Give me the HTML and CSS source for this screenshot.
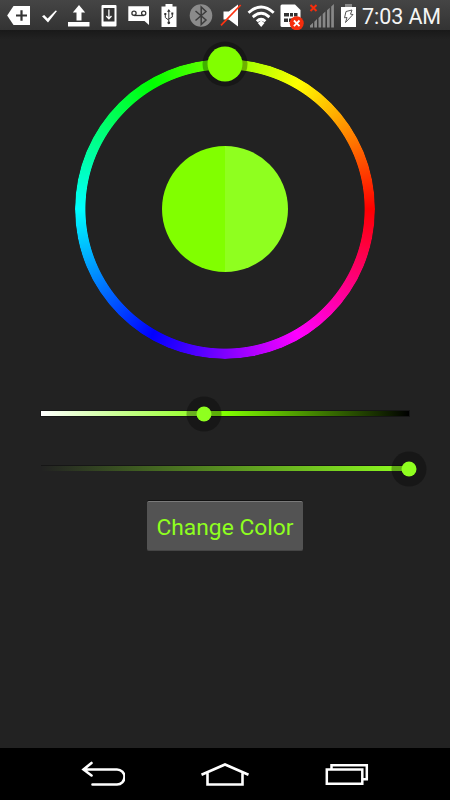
FILE: index.html
```html
<!DOCTYPE html>
<html lang="en">
<head>
  <meta charset="UTF-8" />
  <meta name="viewport" content="width=device-width, initial-scale=1.0"/>
  <title>Color Picker</title>
  <link rel="stylesheet" href="styles.css">
</head>
<body>

  <header class="status-bar">
    <!-- keyboard -->
    <svg width="36" height="30" viewBox="0 0 36 30"><path d="M7.2 15.5 13.5 6H30v19H13.500z" fill="#fff"/><path d="M21.500 10.200v10.600M16 15.500h11" stroke="#333" stroke-width="2.200"/></svg>
    <!-- check -->
    <svg width="26" height="30" viewBox="36 0 26 30"><path d="M42 16.200l2.200-1.300 3.400 3.600 8-8 1.400.5L48 22.600z" fill="#fff"/></svg>
    <!-- upload -->
    <svg width="34" height="30" viewBox="62 0 34 30"><path d="M79 5l6.200 7.500h-3.700v8h-5v-8h-3.700zM68 22h21.500v4.500H68z" fill="#fff"/></svg>
    <!-- download to phone -->
    <svg width="27" height="30" viewBox="96 0 27 30"><rect x="101.500" y="5" width="15" height="21.500" rx="1" fill="#fff"/><path d="M103.500 8h11v13.500h-11z" fill="#333"/><path d="M108.900 9.500v9M106.300 16l2.600 2.800 2.600-2.800" fill="none" stroke="#fff" stroke-width="1.300"/></svg>
    <!-- voicemail -->
    <svg width="31" height="30" viewBox="123 0 31 30"><path d="M128.300 6.200H149V25l-4.500-4h-16.200z" fill="#fff"/><path d="M134 15.500h10" stroke="#333" stroke-width="1.300"/><circle cx="134" cy="13.300" r="2.100" fill="none" stroke="#333" stroke-width="1.300"/><circle cx="143.700" cy="13.300" r="2.100" fill="none" stroke="#333" stroke-width="1.300"/></svg>
    <!-- usb -->
    <svg width="29" height="30" viewBox="154 0 29 30"><path d="M161.500 6.500h4V4h7v2.500h4V27h-15z" fill="#fff"/><path d="M168.800 10.500v13M165.300 14v3.500l3.500 2.700M172.300 13.500v3.500l-3.500 2" fill="none" stroke="#333"/><path d="M168.800 9l1.800 2.700H167zM164.300 13h2v2h-2zM171.300 12.500h2v2h-2z" fill="#333"/><circle cx="168.800" cy="22.800" r="1.400" fill="#333"/></svg>
    <!-- bluetooth -->
    <svg width="33" height="30" viewBox="183 0 33 30"><circle cx="201" cy="15.500" r="11.300" fill="#8b8b8b"/><path d="M195.500 11l10.500 9-4.800 4.500V7L206 11.500 195.500 20.500" fill="none" stroke="#3c3c3c" stroke-width="1.500"/></svg>
    <!-- muted speaker -->
    <svg width="29" height="30" viewBox="216 0 29 30"><path d="M223.500 11.500h5.300l9.200-7v22l-9.200-7h-5.300z" fill="#fff"/><path d="M221 25.300L240.700 5" stroke="#f31" stroke-width="1.700"/></svg>
    <!-- wifi -->
    <svg width="33" height="30" viewBox="245 0 33 30"><g fill="none" stroke="#fff" stroke-width="2.800"><path d="M248.500 12.700q12.600-11.500 25.200 0"/><path d="M252.800 17.100q8.300-7.600 16.600 0"/><path d="M256.800 21.300q4.300-4 8.600 0"/></g><path d="M257.800 23l3.400-2.500 3.300 2.500-3.300 4z" fill="#fff"/></svg>
    <!-- sim card -->
    <svg width="26" height="30" viewBox="278 0 26 30"><path d="M280.500 6q0-1.500 1.500-1.500h13l5.500 5.500v15.500q0 1.500-1.500 1.500h-17q-1.500 0-1.500-1.500z" fill="#fff"/><path d="M284 13h5v3.500h-5zM290 13h3v3.500h-3zM294 13h3.500v3.500H294zM284 18.500h4v3.500h-4zM289 18.500h4v3.500h-4z" fill="#333"/><circle cx="296.700" cy="23.300" r="7" fill="#f62d0c"/><path d="M293.900 20.500l5.600 5.600M299.500 20.500l-5.600 5.600" stroke="#fff" stroke-width="1.800"/></svg>
    <!-- no signal -->
    <svg width="33" height="30" viewBox="304 0 33 30"><path d="M310 25.500l3-2.700v4.700h-3zM314.300 21.700l2.700-2.600v8.400h-2.700zM318.500 17.900l2.700-2.600v12.200h-2.700zM322.700 14l2.700-2.500v16h-2.700zM327 10.200l2.700-2.500v19.800H327zM331.200 6.400l2.700-2.400v23.500h-2.700z" fill="#888"/><path d="M310.500 5l6 6M316.500 5l-6 6" stroke="#f62d0c" stroke-width="2"/></svg>
    <!-- battery -->
    <svg width="24" height="30" viewBox="337 0 24 30"><path d="M345 4h7v3h-7z" fill="#888"/><path d="M341 7h15v20h-15z" fill="#fff"/><path d="M346 11.500l6-1.500-1.500 4.200 2.500.3-7.500 8 1.500-5-2.500.3z" fill="none" stroke="#555"/></svg>
    <span class="clock">7:03 AM</span>
  </header>

  <main>
    <div class="wheel">
      <div class="wheel-ring"></div>
      <div class="wheel-center"></div>
      <div class="wheel-knob"></div>
    </div>

    <div class="bar bar-value">
      <div class="knob" style="left: 44.2%"></div>
    </div>
    <div class="bar bar-opacity">
      <div class="knob" style="left: 100%"></div>
    </div>

    <button class="change-btn">Change Color</button>
  </main>

  <nav class="nav-bar">
    <svg width="44" height="26" viewBox="0 0 44 26" fill="none" stroke="#fff" stroke-width="2.600" stroke-linecap="round"><path d="M10.500 2L2.500 8.500l8 6M3 8.500h33a7.500 7.500 0 0 1 0 15H11.500"/></svg>
    <svg width="50" height="26" viewBox="0 0 50 26" fill="none" stroke="#fff" stroke-width="2.600"><path d="M1.500 13.700L25 3.500l23.500 10.200M7.500 11.500v12h35v-12"/></svg>
    <svg width="44" height="26" viewBox="0 0 44 26" fill="none" stroke="#fff" stroke-width="2.500"><path d="M1.800 8.500h35.500v14.300H1.800zM6.500 8V4.200h35.300v14h-4"/></svg>
  </nav>

</body>
</html>
```
FILE: styles.css
```css
:root {
  --bg: #222222;
  --accent: #8fff1f;
  --hue: #81ff00;
}

* {
  box-sizing: border-box;
  margin: 0;
  padding: 0;
}

body {
  background: var(--bg);
  font-family: Roboto, sans-serif;
  height: 100vh;
  display: flex;
  flex-direction: column;
  overflow: hidden;
}

.status-bar {
  display: flex;
  height: 30px;
  background: linear-gradient(#454545, #333333);
}

.status-bar svg {
  flex: none;
}

.clock {
  width: 80px;
  text-align: right;
  color: #f4f4f4;
  font-size: 21.5px;
  line-height: 33px;
  letter-spacing: -0.1px;
  white-space: nowrap;
}

main {
  flex: 1;
  display: flex;
  flex-direction: column;
  align-items: center;
  padding-top: 28.7px;
  background: linear-gradient(#191919, var(--bg) 10px);
}

.wheel {
  position: relative;
  width: 300px;
  height: 300px;
  display: grid;
  place-items: center;
}

.wheel-ring {
  grid-area: 1 / 1;
  width: 300px;
  height: 300px;
  border-radius: 50%;
  background: conic-gradient(from 90deg, #f00, #f0f, #00f, #0ff, #0f0, #ff0, #f00);
  -webkit-mask: radial-gradient(closest-side, transparent 139.2px, #000 140px);
  mask: radial-gradient(closest-side, transparent 139.2px, #000 140px);
}

.wheel-center {
  grid-area: 1 / 1;
  width: 126px;
  height: 126px;
  border-radius: 50%;
  background: linear-gradient(90deg, var(--hue) 50%, var(--accent) 50%);
}

/* the knobs share a translucent halo */
.wheel-knob,
.knob {
  position: absolute;
  border-radius: 50%;
  transform: translate(-50%, -50%);
}

.wheel-knob {
  left: 50%;
  top: 5px;
  width: 35px;
  height: 35px;
  background: var(--hue);
  box-shadow: 0 0 0 5px rgba(0, 0, 0, 0.31);
}

.bar {
  position: relative;
  width: 368px;
  height: 5px;
}

.bar-value {
  margin-top: 52.3px;
  background: linear-gradient(90deg, #fff, var(--hue) 50%, #000);
  box-shadow: 0 0 0 1px rgba(0, 0, 0, 0.35);
}

.bar-opacity {
  margin-top: 50px;
  background: linear-gradient(90deg, transparent, var(--accent));
  box-shadow: 0 -1px 0 rgba(0, 0, 0, 0.35);
}

.knob {
  top: 55%;
  width: 15px;
  height: 15px;
  background: var(--accent);
  box-shadow: 0 0 0 10px rgba(0, 0, 0, 0.31);
}

.change-btn {
  margin-top: 30px;
  width: 156px;
  height: 50px;
  padding-top: 3px;
  border: none;
  border-top: 1px solid #7a7a7a;
  border-bottom: 1px solid #454545;
  border-radius: 2px;
  background: #535353;
  box-shadow: 0 -1px 0 #111;
  color: var(--accent);
  font-family: inherit;
  font-size: 22.8px;
  white-space: nowrap;
}

.nav-bar {
  display: flex;
  justify-content: space-between;
  height: 52px;
  padding: 13px 81px 0;
  background: #000;
}
```
